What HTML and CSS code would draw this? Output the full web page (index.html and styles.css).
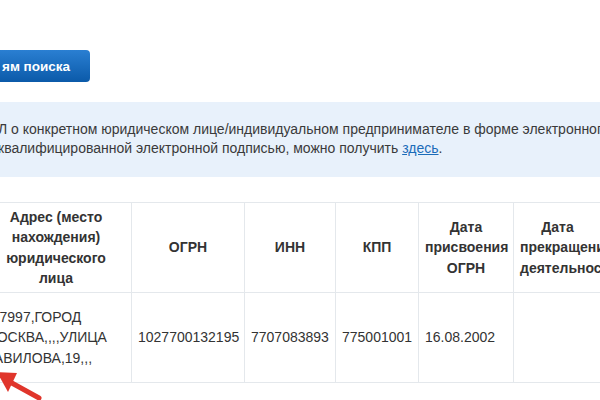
FILE: index.html
```html
<!DOCTYPE html>
<html lang="ru">
<head>
<meta charset="utf-8">
<link rel="stylesheet" href="styles.css">
</head>
<body>
<div class="page">
  <div class="toolbar">
    <button class="btn">ям поиска</button>
  </div>
  <div class="info">
    <div class="line">Л о конкретном юридическом лице/индивидуальном предпринимателе в форме электронного документа, подписанного усиленной</div>
    <div class="line">квалифицированной электронной подписью, можно получить <a href="#">здесь</a>.</div>
  </div>
  <table class="grid">
    <colgroup>
      <col class="c0"><col class="c1"><col class="c2"><col class="c3"><col class="c4"><col class="c5">
    </colgroup>
    <thead>
      <tr>
        <th class="h-addr">Адрес (место нахождения) юридического лица</th>
        <th>ОГРН</th>
        <th>ИНН</th>
        <th>КПП</th>
        <th>Дата присвоения ОГРН</th>
        <th>Дата прекращения деятельности</th>
      </tr>
    </thead>
    <tbody>
      <tr>
        <td class="addr">117997,ГОРОД МОСКВА,,,,УЛИЦА ВАВИЛОВА,19,,,</td>
        <td>1027700132195</td>
        <td>7707083893</td>
        <td>775001001</td>
        <td>16.08.2002</td>
        <td></td>
      </tr>
    </tbody>
  </table>
  <svg class="arrow" width="60" height="40" viewBox="0 360 60 40">
    <line x1="39" y1="398" x2="10" y2="382" stroke="#e0352b" stroke-width="5" stroke-linecap="round"/>
    <polygon points="-3,372 17,373 8,392" fill="#e0352b"/>
  </svg>
</div>
</body>
</html>
```

FILE: styles.css
```css
html, body {
  margin: 0;
  padding: 0;
  background: #fff;
}
.page {
  position: relative;
  width: 600px;
  height: 400px;
  overflow: hidden;
  font-family: "Liberation Sans", Arial, sans-serif;
  color: #333;
}
.toolbar {
  padding-top: 50px;
  display: flex;
}
.btn {
  margin-left: -10px;
  height: 32px;
  padding: 0 20px 0 12px;
  border: none;
  border-radius: 4px;
  background: linear-gradient(#2a7fd2, #0b5aa9);
  color: #fff;
  font-family: "Liberation Sans", Arial, sans-serif;
  font-weight: bold;
  font-size: 13.5px;
}
.info {
  margin-top: 20px;
  height: 75px;
  box-sizing: border-box;
  padding: 18px 0 0 0;
  background: #e8f1fb;
  font-size: 14px;
  line-height: 19px;
  color: #3a3a3a;
}
.info .line {
  white-space: nowrap;
  margin-left: -2px;
}
.info a {
  color: #1b6cb9;
  text-decoration: underline;
}
.grid {
  margin-top: 25px;
  margin-left: -20px;
  border-collapse: collapse;
  table-layout: fixed;
  width: 621px;
  font-size: 14px;
  line-height: 20.5px;
}
.c0 { width: 151px; }
.c1 { width: 113px; }
.c2 { width: 91px; }
.c3 { width: 83px; }
.c4 { width: 95px; }
.c5 { width: 88px; }
.grid th, .grid td {
  border: 1px solid #e4e8ec;
  padding: 0 6px;
  height: 89px;
  vertical-align: middle;
}
.grid th {
  font-weight: bold;
  text-align: center;
}
.grid th.h-addr {
  padding: 0 13px;
}
.grid td {
  text-align: left;
  white-space: nowrap;
}
.grid td.addr {
  white-space: normal;
  padding-left: 4px;
}
.arrow {
  position: absolute;
  left: 0;
  top: 360px;
}
```
